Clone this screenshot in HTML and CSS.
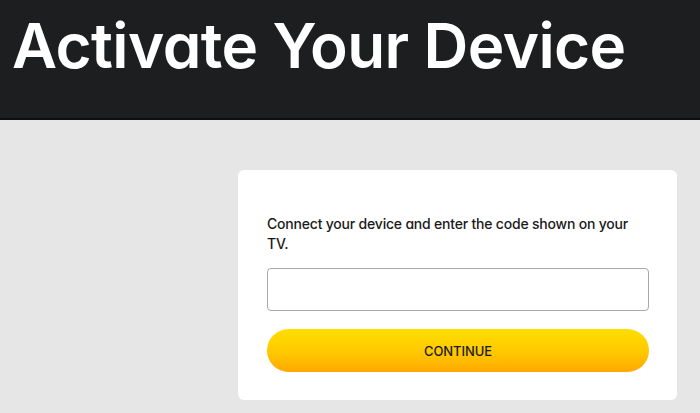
FILE: index.html
```html
<!DOCTYPE html>
<html lang="en">
<head>
<meta charset="utf-8">
<title>Activate Your Device</title>
<link rel="stylesheet" href="styles.css">
</head>
<body>
<header class="top">
  <h1 class="title">Activate Your Device</h1>
</header>
<main class="page">
  <section class="card">
    <p class="lead">Connect your device and enter the code shown on your TV.</p>
    <input class="code" type="text" aria-label="Code">
    <button class="continue" type="button">CONTINUE</button>
  </section>
</main>
</body>
</html>
```
FILE: styles.css
```css
html, body {
  margin: 0;
  padding: 0;
}
body {
  background: #e6e6e6;
  font-family: Inter, "Noto Sans", sans-serif;
  font-feature-settings: "cv11";
  color: #1f1f1f;
  height: 413px;
  overflow: hidden;
}
.top {
  background: #1d1e20;
  height: 118px;
  border-bottom: 2px solid #0e0e0f;
  box-sizing: content-box;
  padding: 0 0 0 12px;
}
.title {
  margin: 0;
  padding-top: 15px;
  font-size: 62px;
  line-height: 62px;
  font-weight: 600;
  color: #ffffff;
  letter-spacing: -0.6px;
}
.page {
  display: flex;
  justify-content: flex-end;
  padding: 50px 23px 0 0;
}
.card {
  width: 439px;
  box-sizing: border-box;
  background: #ffffff;
  border-radius: 6px;
  padding: 44px 28px 28px 29px;
  display: flex;
  flex-direction: column;
}
.lead {
  margin: 0 0 14px;
  font-size: 14px;
  line-height: 20px;
  font-weight: 500;
  letter-spacing: -0.2px;
  color: #1a1a1a;
}
.code {
  height: 43px;
  box-sizing: border-box;
  border: 1px solid #a8a8a8;
  border-radius: 4px;
  background: #fff;
  margin: 0 0 18px;
  padding: 0 12px;
  font: inherit;
}
.continue {
  height: 43px;
  border: none;
  border-radius: 22px;
  background: linear-gradient(180deg, #ffde00 0%, #ffc800 55%, #ffa800 100%);
  font-family: inherit;
  font-feature-settings: "cv11";
  font-size: 13px;
  font-weight: 500;
  letter-spacing: -0.1px;
  color: #1a1a1a;
  padding: 0;
}
```
